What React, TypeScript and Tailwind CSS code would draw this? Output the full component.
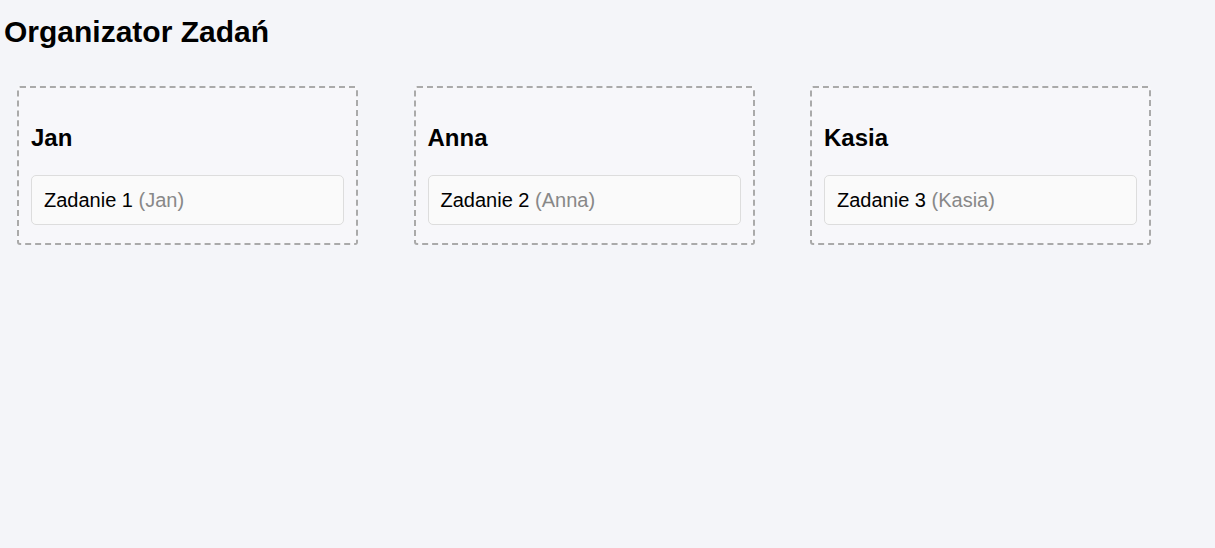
import React from "react";

const columns = [
  { name: "Jan", task: "Zadanie 1" },
  { name: "Anna", task: "Zadanie 2" },
  { name: "Kasia", task: "Zadanie 3" },
];

export default function App() {
  return (
    <div
      className="min-h-[548px] w-full bg-[#f4f5f9] text-black"
      style={{ fontFamily: '"Liberation Sans", Arial, sans-serif' }}
    >
      <h1 className="pl-[4px] pt-[15px] text-[30px] font-bold leading-[34px]">
        Organizator Zadań
      </h1>
      <div className="ml-[17px] mt-[37px] flex items-start gap-[55.5px]">
        {columns.map((c) => (
          <div
            key={c.name}
            className="w-[341px] rounded-[3px] border-2 border-dashed border-[#aaaaaa] bg-[#f7f7fa] px-[12px] pb-[18px] pt-[12px]"
          >
            <h2 className="mt-[24px] text-[24px] font-bold leading-[28px]">{c.name}</h2>
            <div className="mt-[22.5px] rounded-[5px] border border-[#dddddd] bg-[#fafafa] pb-[12px] pl-[12px] pt-[12px] text-[20px] leading-[24px]">
              {c.task} <span className="text-[#888888]">({c.name})</span>
            </div>
          </div>
        ))}
      </div>
    </div>
  );
}
